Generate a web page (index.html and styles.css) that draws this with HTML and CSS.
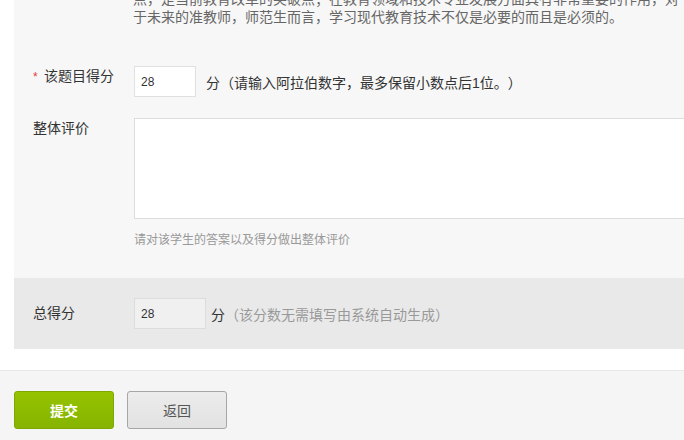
FILE: index.html
```html
<!DOCTYPE html>
<html lang="zh-CN">
<head>
<meta charset="utf-8">
<title>评分</title>
<link rel="stylesheet" href="styles.css">
</head>
<body>
<div class="page">
  <div class="panel">
    <div class="desc">
      <p>点，是当前教育改革的突破点；在教育领域和技术专业发展方面具有非常重要的作用，对</p>
      <p>于未来的准教师，师范生而言，学习现代教育技术不仅是必要的而且是必须的。</p>
    </div>
    <div class="row row-score">
      <label class="lbl"><span class="req">*</span>该题目得分</label>
      <div class="field inline">
        <input class="num" type="text" value="28">
        <span class="unit">分（请输入阿拉伯数字，最多保留小数点后1位。）</span>
      </div>
    </div>
    <div class="row row-comment">
      <label class="lbl">整体评价</label>
      <div class="field">
        <textarea class="comment"></textarea>
        <p class="hint">请对该学生的答案以及得分做出整体评价</p>
      </div>
    </div>
    <div class="row total">
      <label class="lbl">总得分</label>
      <div class="field inline">
        <input class="num num-total" type="text" value="28" disabled>
        <span class="unit unit-total">分</span><span class="note">（该分数无需填写由系统自动生成）</span>
      </div>
    </div>
  </div>
  <div class="footer">
    <button class="btn btn-primary" type="button">提交</button>
    <button class="btn btn-default" type="button">返回</button>
  </div>
</div>
</body>
</html>
```

FILE: styles.css
```css
html, body {
  margin: 0;
  padding: 0;
  background: #fff;
  overflow: hidden;
}
body {
  width: 684px;
  height: 440px;
  font-family: "Liberation Sans", "Noto Sans CJK SC", sans-serif;
  font-size: 14px;
  color: #333;
  text-spacing-trim: space-all;
}
.page {
  display: flex;
  flex-direction: column;
  height: 440px;
}
.panel {
  margin-left: 14px;
  background: #f7f7f7;
  margin-top: -10px;
}
.desc {
  padding-left: 119px;
  color: #666;
  font-size: 14px;
  line-height: 18px;
}
.desc p {
  margin: 0;
  white-space: nowrap;
}
.row {
  display: flex;
  align-items: flex-start;
}
.lbl {
  width: 101px;
  padding-left: 19px;
  line-height: 20px;
  color: #333;
  flex-shrink: 0;
  white-space: nowrap;
}
.req {
  color: #e4393c;
  font-size: 12px;
  margin-left: -11px;
  display: inline-block;
  width: 11px;
}
.row-score {
  margin-top: 40px;
}
.row-score .lbl {
  padding-left: 30px;
  width: 90px;
}
.field.inline {
  display: flex;
  align-items: center;
}
.num {
  box-sizing: border-box;
  width: 62px;
  height: 31px;
  border: 1px solid #e0e0e0;
  background: #fff;
  padding: 0 6px;
  font-family: "Liberation Sans", sans-serif;
  font-size: 12px;
  color: #333;
  outline: none;
  margin: 0;
}
.unit {
  margin-left: 10px;
  color: #333;
  white-space: nowrap;
}
.row-comment {
  margin-top: 21px;
}
.comment {
  display: block;
  box-sizing: border-box;
  width: 600px;
  height: 101px;
  border: 1px solid #ddd;
  background: #fff;
  resize: none;
  margin: 0;
  padding: 4px;
}
.hint {
  margin: 12px 0 0;
  font-size: 12px;
  line-height: 18px;
  color: #999;
  white-space: nowrap;
}
.total {
  margin-top: 29px;
  background: #e9e9e9;
  padding: 20px 0;
  align-items: center;
}
.total .lbl {
  line-height: 31px;
}
.num-total {
  width: 72px;
  background: #f0f0f0;
  border-color: #dcdcdc;
  color: #333;
}
.unit-total {
  margin-left: 5px;
}
.note {
  color: #999;
  white-space: nowrap;
}
.footer {
  margin-top: 21px;
  border-top: 1px solid #e8e8e8;
  background: #f5f5f5;
  flex: 1;
  padding: 20px 0 0 14px;
  display: flex;
  align-items: flex-start;
  gap: 13px;
}
.btn {
  box-sizing: border-box;
  width: 100px;
  height: 38px;
  border-radius: 3px;
  font-family: "Liberation Sans", "Noto Sans CJK SC", sans-serif;
  font-size: 14px;
  cursor: pointer;
  margin: 0;
  padding: 0;
}
.btn-primary {
  background: linear-gradient(#95c300, #86b400);
  border: 1px solid #7ea800;
  color: #fff;
  font-weight: bold;
}
.btn-default {
  background: linear-gradient(#ececec, #e2e2e2);
  border: 1px solid #a6a6a6;
  color: #555;
}
```
